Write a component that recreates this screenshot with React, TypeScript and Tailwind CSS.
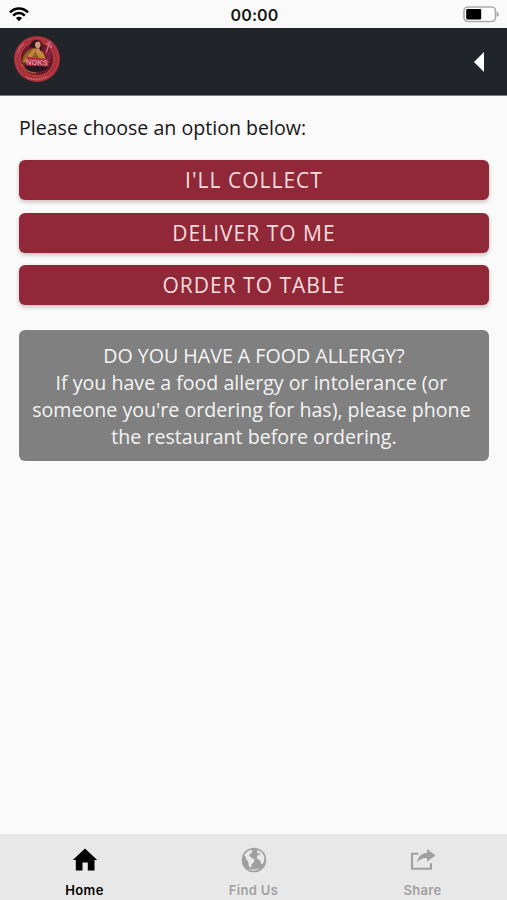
import React, { useState } from 'react';

type TabKey = 'home' | 'find' | 'share';

const ORDER_OPTIONS = ["I'll collect", 'Deliver to me', 'Order to table'];

function WifiIcon() {
  return (
    <svg width="20" height="15" viewBox="0 0 20 15" fill="none" stroke="#000" strokeWidth="2.5">
      <path d="M1 5.4C6 .1 14 .1 19 5.4" />
      <path d="M4.2 8.7c3.3-3.5 8.3-3.5 11.6 0" />
      <path d="M10 14.2 6.9 11.1c1.8-1.7 4.4-1.7 6.2 0z" fill="#000" stroke="none" />
    </svg>
  );
}

function BatteryIcon() {
  return (
    <svg width="37" height="17" viewBox="0 0 37 17">
      <rect x="1" y="1" width="31.5" height="14.5" rx="4" fill="#fff" stroke="#aaa" strokeWidth="1.6" />
      <rect x="3.2" y="3" width="15" height="10.5" rx="1" fill="#000" />
      <path d="M33.8 5.8c2.4.8 2.4 4.1 0 4.9z" fill="#999" />
    </svg>
  );
}

function Logo() {
  return (
    <svg width="48" height="48" viewBox="0 0 48 48">
      <circle cx="24" cy="24" r="23" fill="#a92e3c" />
      <circle cx="24" cy="24" r="21.2" fill="none" stroke="#bd4149" strokeWidth="1" />
      <circle cx="24" cy="24" r="17" fill="#6b1a2c" stroke="#c4523d" strokeWidth="1" />
      {/* figure */}
      <path d="M9 27c1-9 7-13 12-14l6 1 7 8 2 6H12c-2 0-3 0-3-1z" fill="#8f5f28" />
      <path d="M20 14c-2 5-8 7-9 13l7-3 5-9zM27 15l8 9-5 3-6-7z" fill="#c08a30" />
      <path d="M17 12c0-8 9-9 12-4l-1 9c-4-5-7-4-11-5z" fill="#2b121b" />
      <ellipse cx="24.8" cy="9.8" rx="2.8" ry="3.4" fill="#d39779" />
      <path d="m22 14 4-1 2 4-4 3z" fill="#c88652" />
      <path d="m33 18 3-9M33 9l5-2M36 9l3 4" fill="none" stroke="#cf6a80" strokeWidth="1.5" />
      <path d="M31 20c3-1 6-4 6-8l2 9-5 7z" fill="#832044" />
      <path d="M12 32c5-2 17-1 23 0-2 6-21 7-23 0z" fill="#241820" />
      <path d="M9 29c2 6 8 9 14 9" fill="none" stroke="#c87834" />
      <path d="m13.5 21.5 21 2.5v7.5l-20.5-1z" fill="#b02b45" />
      <text x="24" y="30" textAnchor="middle" fontFamily="Liberation Sans, sans-serif" fontSize="7.5" fontWeight="700" fill="#de8f9a" transform="rotate(3 24 27)">NOKS</text>
      <path d="M5 18c1-4 3-7 6-9M13 42c7 3 14 3 22-1" fill="none" stroke="#d06d70" strokeWidth="1.7" strokeDasharray="1.5 1" />
    </svg>
  );
}

function HomeIcon() {
  return (
    <svg width="26" height="24" viewBox="0 0 26 24" fill="currentColor">
      <path d="M13 .5 25.2 12h-2.7v10.5h-6.7v-8h-5.3v8H3.8V12H.8z" />
    </svg>
  );
}

function EarthIcon() {
  return (
    <svg width="26" height="26" viewBox="0 0 26 26">
      <circle cx="13" cy="13" r="12.3" fill="currentColor" />
      <path
        fill="#e8e8e8"
        d="M3.2 8.6C4.7 5.6 7.3 3.4 10.6 2.7l1.2.8-1.6 1.2 1 .9-2.3 1.3-.9 1.9 3.9 2.6 1.7 1.4-1.3 3-1.6 1.5-.5 2.9-1.5.6-1.2-3.3-.3-2.9-2-2.3-.4-2.4zM16.8 3c3.4 1.2 5.9 4 6.6 7.4l-.6 4.7-1.5 2.2-1.3-.5-.8-3.4-2.4-.8-1.1-2.4 1.3-2.2 2.6-.5-.9-1.3-1.8.3-.9-1.5zM7.2 21.9c3.6.9 7.6.7 11.2-.7-3 3-8 3.3-11.2.7z"
      />
    </svg>
  );
}

function ShareIcon() {
  return (
    <svg width="26" height="24" viewBox="0 0 26 24" fill="none">
      <path d="M8.5 5.8H2v15h19v-5.6" stroke="currentColor" strokeWidth="2.1" />
      <path d="M17 1 25.6 7.4 17 13.8V9.9c-4.6-.2-7.2 1.4-10 4.6.9-5.6 4-9.4 10-9.8z" fill="currentColor" />
    </svg>
  );
}

const TABS: { key: TabKey; label: string; icon: React.ReactNode }[] = [
  { key: 'home', label: 'Home', icon: <HomeIcon /> },
  { key: 'find', label: 'Find Us', icon: <EarthIcon /> },
  { key: 'share', label: 'Share', icon: <ShareIcon /> },
];

export default function App() {
  const [activeTab, setActiveTab] = useState<TabKey>('home');

  return (
    <div className="h-screen flex flex-col overflow-hidden bg-[#fafafa] font-['Open_Sans',sans-serif] text-[#171717]">
      <div className="h-7 shrink-0 grid grid-cols-3 items-center pl-[9px] pr-[7px]">
        <WifiIcon />
        <span className="text-center font-['Inter',sans-serif] text-[16px] font-semibold leading-none tracking-[0.1px] pt-px">00:00</span>
        <div className="flex justify-end"><BatteryIcon /></div>
      </div>

      <header className="h-[68px] shrink-0 flex items-center justify-between bg-[#212429] border-b border-[#777a7c] pl-[13px] pr-[23px]">
        <div className="pb-1.5"><Logo /></div>
        <button aria-label="Back">
          <svg width="10" height="20" viewBox="0 0 10 20"><path d="M0 10 10 0v20z" fill="#fff" /></svg>
        </button>
      </header>

      <main className="flex-1 pl-[19px] pr-[18px] pt-[18px]">
        <p className="text-[19.6px] leading-7">Please choose an option below:</p>
        <div className="mt-[18px] flex flex-col gap-[12.5px]">
          {ORDER_OPTIONS.map(option => (
            <button key={option} className="h-10 w-full rounded-md bg-[#912838] text-[21px] leading-10 tracking-[1px] uppercase text-[#fbdcdf] shadow-[0_2px_4px_rgba(80,30,30,0.28)]">
              {option}
            </button>
          ))}
        </div>
        <div className="mt-[25px] h-[131px] rounded-md bg-[#808080] px-1.5 pt-3 text-center text-[19.6px] leading-[27px] text-[#f4f4f4]">
          <p>DO YOU HAVE A FOOD ALLERGY?</p>
          <p>
            If you have a food allergy or intolerance (or&nbsp;<br />
            someone you're ordering for has), please phone&nbsp;<br />
            the restaurant before ordering.
          </p>
        </div>
      </main>

      <nav className="h-[66px] shrink-0 grid grid-cols-3 bg-[#e8e8e8] font-['Inter',sans-serif]">
        {TABS.map(tab => (
          <button
            key={tab.key}
            onClick={() => setActiveTab(tab.key)}
            className={`flex flex-col items-center pt-[13px] ${activeTab === tab.key ? 'text-black' : 'text-[#a0a0a0]'}`}
          >
            <span className="h-[26px] flex items-center">{tab.icon}</span>
            <span className="mt-2 text-[13px] font-semibold leading-[18px] tracking-[0.35px]">{tab.label}</span>
          </button>
        ))}
      </nav>
    </div>
  );
}
